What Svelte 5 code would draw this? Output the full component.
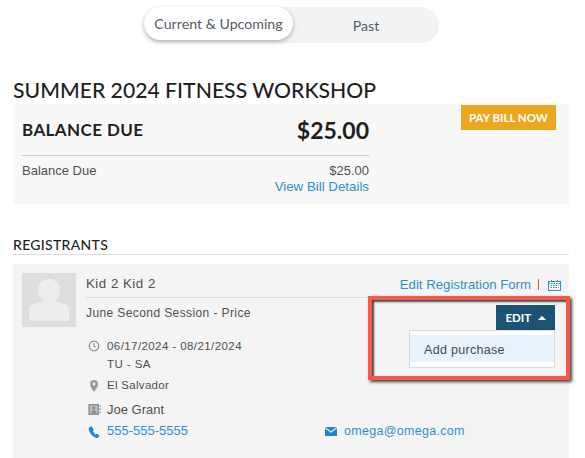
<script>
  const tabs = [
    { label: 'Current & Upcoming', active: true },
    { label: 'Past', active: false }
  ];
</script>

<div class="page">
  <div class="toggle-row">
    <div class="toggle">
      {#each tabs as t}
        <div class="tab" class:active={t.active}>{t.label}</div>
      {/each}
    </div>
  </div>

  <h1>SUMMER 2024 FITNESS WORKSHOP</h1>

  <section class="bill">
    <div class="bill-main">
      <div class="bill-head">
        <span class="bal">BALANCE DUE</span>
        <span class="amt">$25.00</span>
      </div>
      <div class="bill-row">
        <span>Balance Due</span>
        <div class="bill-right">
          <div>$25.00</div>
          <div class="link">View Bill Details</div>
        </div>
      </div>
    </div>
    <button class="pay">PAY BILL NOW</button>
  </section>

  <h2>REGISTRANTS</h2>

  <section class="card">
    <div class="avatar">
      <svg viewBox="0 0 54 54" width="54" height="54">
        <ellipse cx="27" cy="17.500" rx="11" ry="11.500" fill="#ededed" />
        <path d="M7 45v-7c0-4 2-6 6-7.500 3-1 6-1 8-2.500h12c2 1.500 5 1.500 8 2.500 4 1.500 6 3.500 6 7.500v7q0 3-3 3H10q-3 0-3-3z" fill="#ededed" />
      </svg>
    </div>
    <div class="main">
      <div class="name-row">
        <span class="name">Kid 2 Kid 2</span>
        <span class="actions">
          <span class="link">Edit Registration Form</span>
          <span class="sep"></span>
          <svg class="cal" viewBox="0 0 13 11" width="13" height="11" fill="none" stroke="#2f8fce" stroke-width="1">
            <rect x="0.500" y="1.500" width="12" height="9" />
            <path d="M3.500 0v2.500M9.500 0v2.500M0.500 3.500h12M2.500 5.500h8M2.500 7.500h8" stroke-dasharray="1.500 1" />
          </svg>
        </span>
      </div>
      <div class="session-row">
        <div class="session">June Second Session - Price</div>
        <div class="edit-wrap">
          <button class="edit">EDIT <span class="caret"></span></button>
          <div class="menu"><div class="item">Add purchase</div></div>
        </div>
      </div>

      <div class="info dates">
        <svg viewBox="0 0 12 12" width="12" height="12" fill="none" stroke="#8f8f8f" stroke-width="1.200">
          <circle cx="6" cy="6" r="4.800" />
          <path d="M6 3v3.200l2 .8" />
        </svg>
        <div>
          <div>06/17/2024 - 08/21/2024</div>
          <div class="days">TU - SA</div>
        </div>
      </div>
      <div class="info place">
        <svg viewBox="0 0 12 14" width="12" height="14">
          <path fill-rule="evenodd" fill="#9a9a9a" d="M6 1a4 4 0 0 1 4 4c0 2.800-2.600 6-4 8-1.400-2-4-5.200-4-8a4 4 0 0 1 4-4zm0 2.600a1.400 1.400 0 1 0 0 2.800 1.400 1.400 0 0 0 0-2.800z" />
        </svg>
        <div>El Salvador</div>
      </div>
      <div class="info contact">
        <svg viewBox="0 0 13 13" width="13" height="13">
          <rect x="0.500" y="1" width="10.500" height="11" fill="#c4c4c4" />
          <path fill="#8f8f8f" fill-rule="evenodd" d="M0.500 1H11v11H0.500zM2 2.500v8h7.500v-8z" />
          <path fill="#9a9a9a" d="M11.500 2.500h1.500v1.500h-1.500zM11.500 5.500h1.500V7h-1.500zM11.500 8.500h1.500V10h-1.500z" />
          <circle cx="5.700" cy="5" r="1.800" fill="#8f8f8f" />
          <path fill="#8f8f8f" d="M3 10.500c0-2.300 1-3.500 2.700-3.500s2.800 1.200 2.800 3.500z" />
        </svg>
        <div>Joe Grant</div>
      </div>
      <div class="reach">
        <div class="info phone">
          <svg viewBox="0 0 13 13" width="12" height="12">
            <path fill="#1f86c8" d="M2.700 .6 1 2.100C.5 2.700.7 4 1.400 5.700c1.200 2.800 3.200 5 5.500 6.300 1.600.9 3.100 1.200 3.800.7l1.500-1.500c.3-.3.2-.8-.1-1L9.700 8.500c-.3-.2-.7-.1-.9.100l-.7.8c-.8-.5-2.400-2.400-2.900-3.900l.9-.8c.2-.2.300-.6.100-.9L4.200.9C3.800.4 3.100.3 2.700.6z" />
          </svg>
          <span class="link">555-555-5555</span>
        </div>
        <div class="info mail">
          <svg viewBox="0 0 12 9" width="12" height="9">
            <path fill="#1f86c8" d="M0 0h12L6 4.300z" />
            <path fill="#1f86c8" d="M0 1.300 6 5.700l6-4.400V9H0z" />
          </svg>
          <span class="link">omega@omega.com</span>
        </div>
      </div>
    </div>
  </section>

  <div class="callout"></div>
</div>

<style>
  :global(body) {
    margin: 0;
    background: #fff;
  }
  .page {
    position: relative;
    width: 585px;
    height: 458px;
    overflow: hidden;
    box-sizing: border-box;
    padding: 7px 16px 0 13px;
    font-family: "Liberation Sans", Arial, sans-serif;
    color: #505050;
  }
  .toggle-row {
    display: flex;
    padding-left: 131px;
  }
  .toggle {
    display: flex;
    width: 295px;
    height: 36px;
    background: #f2f3f5;
    border-radius: 18px;
  }
  .tab {
    flex: 1;
    display: flex;
    align-items: center;
    justify-content: center;
    font-family: Lato, sans-serif;
    font-size: 14.200px;
    color: #555b66;
  }
  .tab.active {
    flex: 0 0 149px;
    height: 33px;
    background: #fff;
    border-radius: 17px;
    box-shadow: 0 2px 5px rgba(0, 0, 0, 0.28);
  }
  h1 {
    margin: 34px 0 0;
    padding-bottom: 1px;
    font-family: Lato, sans-serif;
    font-weight: 500;
    font-size: 21.200px;
    line-height: 26px;
    color: #1f1f1f;
  }
  .bill {
    display: flex;
    justify-content: space-between;
    align-items: flex-start;
    height: 101px;
    background: #f8f8f8;
    padding: 0 13px 0 9px;
  }
  .bill-main {
    width: 347px;
  }
  .bill-head {
    display: flex;
    justify-content: space-between;
    align-items: center;
    height: 51px;
    border-bottom: 1px solid #c9c9c9;
    color: #1f1f1f;
    font-family: Lato, sans-serif;
  }
  .bal {
    font-weight: 700;
    font-size: 17px;
    letter-spacing: 0.4px;
  }
  .amt {
    font-weight: 700;
    font-size: 23px;
  }
  .bill-row {
    display: flex;
    justify-content: space-between;
    padding-top: 7px;
    font-size: 13px;
    line-height: 16px;
  }
  .bill-right {
    text-align: right;
  }
  .link {
    color: #2f8fce;
  }
  .bill-right .link {
    font-size: 13.300px;
    line-height: 16px;
  }
  .pay {
    margin-top: 1px;
    width: 95px;
    height: 25px;
    border: 0;
    padding: 0;
    background: #eda620;
    color: #fff;
    font-family: Lato, sans-serif;
    font-weight: 700;
    font-size: 11.500px;
  }
  h2 {
    margin: 32px 0 0;
    font-family: Lato, sans-serif;
    font-weight: 500;
    font-size: 14px;
    line-height: 16px;
    letter-spacing: 0.3px;
    color: #1f1f1f;
    padding-bottom: 1px;
    border-bottom: 1px solid #dcdcdc;
  }
  .card {
    display: flex;
    margin-top: 9px;
    height: 220px;
    box-sizing: border-box;
    background: #f4f4f4;
    padding: 9px 9px 0;
    gap: 10px;
    font-size: 12px;
  }
  .avatar {
    flex: none;
    width: 54px;
    height: 54px;
    background: #dedede;
  }
  .avatar svg {
    display: block;
  }
  .main {
    flex: 1;
  }
  .name-row {
    display: flex;
    justify-content: space-between;
    align-items: center;
    height: 25px;
    box-sizing: border-box;
    border-bottom: 1px solid #dcdcdc;
  }
  .name {
    font-size: 13.300px;
    letter-spacing: 0.5px;
    margin-top: -4px;
  }
  .actions {
    display: flex;
    align-items: center;
    gap: 7px;
    font-size: 13.200px;
    margin-right: -1px;
    margin-top: -2px;
  }
  .sep {
    width: 1px;
    height: 11px;
    background: #d9534f;
  }
  .cal {
    margin-left: 2px;
    margin-top: 3px;
  }
  .session-row {
    display: flex;
    justify-content: space-between;
    align-items: flex-start;
    height: 39px;
  }
  .session {
    padding-top: 8px;
    letter-spacing: 0.4px;
    line-height: 14px;
  }
  .edit-wrap {
    width: 146px;
    margin-top: 7px;
    margin-right: 5px;
    display: flex;
    flex-direction: column;
    align-items: flex-end;
    position: relative;
    z-index: 1;
    height: 0;
  }
  .edit {
    width: 59px;
    height: 25px;
    flex: none;
    border: 0;
    padding: 0;
    background: #1c5373;
    color: #fff;
    font-family: Lato, sans-serif;
    font-weight: 700;
    font-size: 11.500px;
  }
  .caret {
    display: inline-block;
    margin-left: 4px;
    vertical-align: 2px;
    border-left: 4px solid transparent;
    border-right: 4px solid transparent;
    border-bottom: 4px solid #fff;
  }
  .menu {
    flex: none;
    width: 100%;
    box-sizing: border-box;
    background: #fff;
    border: 1px solid #dcdcdc;
    padding: 4px 0 5px;
  }
  .item {
    background: #e8f2fb;
    height: 27px;
    line-height: 30px;
    padding-left: 14px;
    font-size: 12.500px;
    letter-spacing: 0.3px;
    color: #3f4a55;
  }
  .info {
    display: flex;
    align-items: flex-start;
    padding-left: 2px;
  }
  .info svg {
    flex: none;
  }
  .dates {
    gap: 7px;
    font-size: 11.500px;
    line-height: 18px;
    letter-spacing: 0.42px;
  }
  .dates svg {
    margin-top: 3px;
  }
  .place {
    gap: 7px;
    font-size: 11.500px;
    line-height: 14px;
    letter-spacing: 0.3px;
    margin-top: 5px;
  }
  .place svg {
    margin-top: 1px;
  }
  .contact {
    gap: 6px;
    margin-top: 9px;
    font-size: 13px;
    line-height: 16px;
  }
  .contact svg {
    margin-top: 1px;
  }
  .reach {
    display: grid;
    grid-template-columns: 239px 1fr;
    margin-top: 5px;
    font-size: 13px;
    line-height: 16px;
  }
  .phone {
    gap: 7px;
  }
  .phone svg {
    margin-top: 3px;
  }
  .mail {
    gap: 7px;
    padding-left: 0;
    font-size: 12.500px;
    letter-spacing: 0.3px;
  }
  .mail svg {
    margin-top: 4px;
  }
  .callout {
    position: absolute;
    left: 368px;
    top: 296px;
    width: 202px;
    height: 84px;
    box-sizing: border-box;
    border: 4px solid #f9584a;
    box-shadow: 2px 2px 3px rgba(0, 0, 0, 0.75), inset 2px 2px 2px rgba(0, 0, 0, 0.7);
    pointer-events: none;
  }
</style>
